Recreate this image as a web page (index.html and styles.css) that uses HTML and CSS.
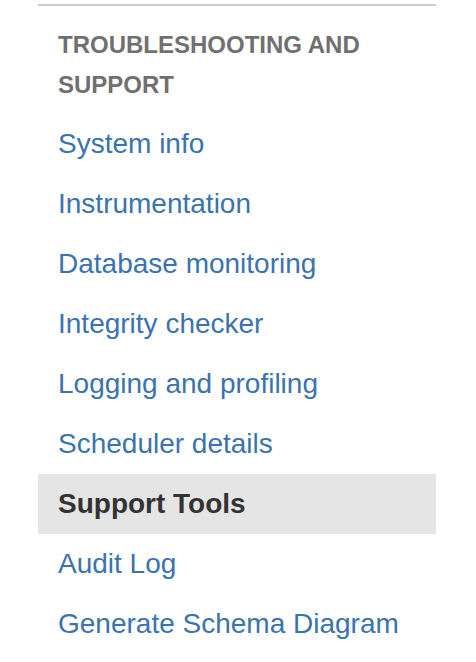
FILE: index.html
```html
<!DOCTYPE html>
<html lang="en">
<head>
    <meta charset="UTF-8">
    <title>Troubleshooting and support</title>
    <link rel="stylesheet" href="styles.css">
</head>
<body>
<div class="menu">
    <h2 class="menu-heading">Troubleshooting and support</h2>
    <ul class="menu-list">
        <li><a href="#">System info</a></li>
        <li><a href="#">Instrumentation</a></li>
        <li><a href="#">Database monitoring</a></li>
        <li><a href="#">Integrity checker</a></li>
        <li><a href="#">Logging and profiling</a></li>
        <li><a href="#">Scheduler details</a></li>
        <li class="selected"><a href="#">Support Tools</a></li>
        <li><a href="#">Audit Log</a></li>
        <li><a href="#">Generate Schema Diagram</a></li>
    </ul>
</div>
</body>
</html>
```
FILE: styles.css
```css
body {
    margin: 0;
    background: #fff;
    font-family: "Liberation Sans", Arial, sans-serif;
}
.menu {
    margin: 4px 40px 0 38px;
    border-top: 2px solid #ccc;
    padding-top: 19px;
}
.menu-heading {
    margin: 0 0 9px;
    padding: 0 20px;
    font-size: 24px;
    line-height: 40px;
    font-weight: bold;
    text-transform: uppercase;
    color: #707070;
}
.menu-list {
    list-style: none;
    margin: 0;
    padding: 0;
}
.menu-list li {
    height: 60px;
    display: flex;
    align-items: center;
    padding: 0 20px;
}
.menu-list a {
    color: #3b73af;
    text-decoration: none;
    font-size: 28px;
}
.menu-list .selected {
    background: #e5e5e5;
}
.menu-list .selected a {
    color: #333;
    font-weight: bold;
}
```
